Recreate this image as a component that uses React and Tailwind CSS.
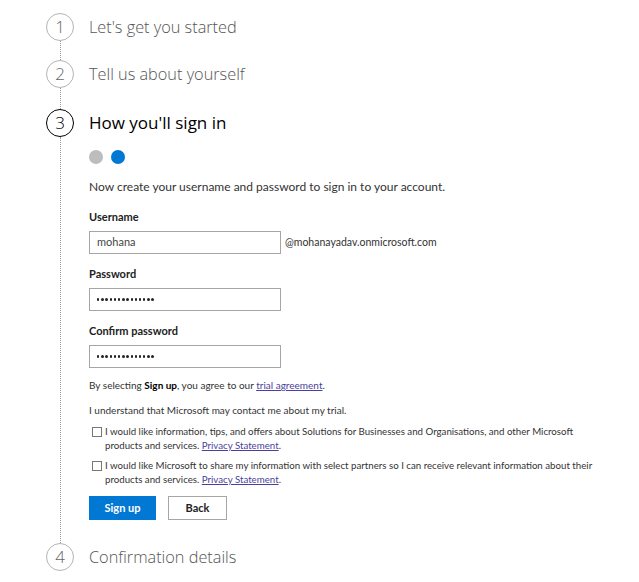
import React from "react";

const font = { fontFamily: 'Lato, "Open Sans", sans-serif' };
const headFont = { fontFamily: '"Open Sans", "Noto Sans", sans-serif' };

function Circle({ n, active }) {
  return (
    <div
      style={headFont}
      className={`w-[28px] h-[28px] shrink-0 rounded-full flex items-center justify-center bg-white text-[17px] font-light ${
        active ? "border-[1.5px] border-black text-black" : "border-[1.5px] border-[#b4b4b4] text-[#666]"
      }`}
    >
      {n}
    </div>
  );
}

function Step({ n, active, title, last, heightClass, children }) {
  return (
    <div className={`flex ${heightClass || ""}`}>
      <div className="w-[28px] flex flex-col items-center">
        <Circle n={n} active={active} />
        {!last && <div className="flex-1 border-l border-dotted border-[#9a9a9a]" />}
      </div>
      <div className="ml-[15px] flex-1">
        <div
          style={headFont}
          className={`h-[28px] flex items-center ${
            active ? "text-[17px] text-black" : "text-[16.3px] font-light text-[#555]"
          }`}
        >
          {title}
        </div>
        {children}
      </div>
    </div>
  );
}

function Dots() {
  return (
    <div className="flex gap-[1.8px]">
      {Array.from({ length: 14 }).map((_, i) => (
        <div key={i} className="w-[2.4px] h-[2.4px] rounded-full bg-[#222]" />
      ))}
    </div>
  );
}

function Field({ label, value, password, suffix }) {
  return (
    <div>
      <div className="text-[11px] font-bold text-[#222] h-[16px] leading-[16px]">{label}</div>
      <div className="mt-[6px] flex items-center">
        <div className="w-[192px] h-[23px] border border-[#a6a6a6] flex items-center px-[7px] text-[11px] text-[#444]">
          {password ? <Dots /> : value}
        </div>
        {suffix && <span className="ml-[4px] text-[10.5px] text-[#333]">{suffix}</span>}
      </div>
    </div>
  );
}

function Check({ children }) {
  return (
    <div className="flex">
      <div className="w-[10px] h-[10px] border border-[#777] mt-[2px] ml-[3px] shrink-0" />
      <div className="ml-[3px] text-[9.7px] leading-[13.5px] text-[#333]">{children}</div>
    </div>
  );
}

export default function App() {
  return (
    <div className="w-[639px] h-[582px] bg-white overflow-hidden pl-[46px] pt-[13px]" style={font}>
      <Step n={1} title="Let's get you started" heightClass="h-[47px]" />
      <Step n={2} title="Tell us about yourself" heightClass="h-[49px]" />
      <Step n={3} active title="How you'll sign in" heightClass="h-[434px]">
        <div className="flex gap-[8px] mt-[13px]">
          <div className="w-[14px] h-[14px] rounded-full bg-[#bdbdbd]" />
          <div className="w-[14px] h-[14px] rounded-full bg-[#0078d4]" />
        </div>
        <div className="mt-[14px] text-[12px] text-[#333] leading-[17px]">
          Now create your username and password to sign in to your account.
        </div>
        <div className="mt-[14px] flex flex-col gap-[12px]">
          <Field label="Username" value="mohana" suffix="@mohanayadav.onmicrosoft.com" />
          <Field label="Password" password />
          <Field label="Confirm password" password />
        </div>
        <div className="mt-[10px] text-[10px] leading-[14px] text-[#333]">
          By selecting <span className="font-bold text-black">Sign up</span>, you agree to our{" "}
          <span className="underline text-[#4a3f9e]">trial agreement</span>.
        </div>
        <div className="mt-[11px] text-[10px] leading-[14px] text-[#333]">
          I understand that Microsoft may contact me about my trial.
        </div>
        <div className="mt-[8px] flex flex-col gap-[7px]">
          <Check>
            <span className="block whitespace-nowrap">
              I would like information, tips, and offers about Solutions for Businesses and Organisations, and other Microsoft
            </span>
            <span className="block whitespace-nowrap">
              products and services. <span className="underline text-[#4a3f9e]">Privacy Statement</span>.
            </span>
          </Check>
          <Check>
            <span className="block whitespace-nowrap">
              I would like Microsoft to share my information with select partners so I can receive relevant information about their
            </span>
            <span className="block whitespace-nowrap">
              products and services. <span className="underline text-[#4a3f9e]">Privacy Statement</span>.
            </span>
          </Check>
        </div>
        <div className="mt-[10px] flex gap-[12px]">
          <div className="w-[67px] h-[24px] bg-[#0078d4] flex items-center justify-center text-white text-[11px] font-bold">
            Sign up
          </div>
          <div className="w-[59px] h-[24px] border border-[#a6a6a6] flex items-center justify-center text-[#222] text-[11px] font-bold">
            Back
          </div>
        </div>
      </Step>
      <Step n={4} title="Confirmation details" last />
    </div>
  );
}
